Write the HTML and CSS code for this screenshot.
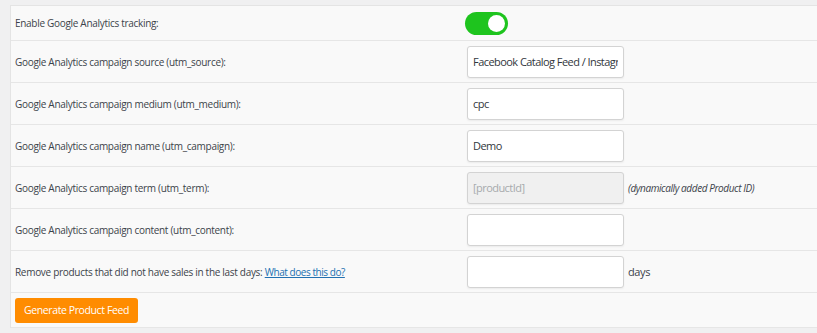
FILE: index.html
```html
<!DOCTYPE html>
<html lang="en">
<head>
  <meta charset="UTF-8">
  <meta name="viewport" content="width=device-width, initial-scale=1.0">
  <title>feed settings</title>
  <link rel="stylesheet" href="styles.css">
</head>
<body>

  <div class="panel">
    <div class="row first">
      <label class="row-label">Enable Google Analytics tracking:</label>
      <span class="toggle on"><span class="knob"></span></span>
    </div>
    <div class="row">
      <label class="row-label">Google Analytics campaign source (utm_source):</label>
      <input class="text-input" type="text" value="Facebook Catalog Feed / Instagram">
    </div>
    <div class="row">
      <label class="row-label">Google Analytics campaign medium (utm_medium):</label>
      <input class="text-input" type="text" value="cpc">
    </div>
    <div class="row">
      <label class="row-label">Google Analytics campaign name (utm_campaign):</label>
      <input class="text-input" type="text" value="Demo">
    </div>
    <div class="row">
      <label class="row-label">Google Analytics campaign term (utm_term):</label>
      <input class="text-input" type="text" value="[productId]" disabled>
      <span class="hint">(dynamically added Product ID)</span>
    </div>
    <div class="row">
      <label class="row-label">Google Analytics campaign content (utm_content):</label>
      <input class="text-input" type="text" value="">
    </div>
    <div class="row">
      <label class="row-label">Remove products that did not have sales in the last days: <a href="#" class="help-link">What does this do?</a></label>
      <input class="text-input" type="text" value="">
      <span class="unit">days</span>
    </div>
    <div class="row button-row">
      <a href="#" class="feed-button">Generate Product Feed</a>
    </div>
  </div>

</body>
</html>
```

FILE: styles.css
```css
body {
  font-family: "Open Sans", Arial, sans-serif;
  background: #f0f0f1;
  margin: 0;
  padding: 5px 0 0 10px;
  color: #3c434a;
}

.panel {
  background: #f9f9f9;
  border-top: 1px solid #e4e4e4;
  border-left: 1px solid #e4e4e4;
}

.row {
  display: flex;
  align-items: center;
  height: 41px;
  padding-left: 4px;
  border-bottom: 1px solid #e6e6e6;
}

.row.first {
  height: 34px;
}

.row-label {
  width: 452px;
  flex-shrink: 0;
  font-size: 10px;
  letter-spacing: -0.3px;
}

.help-link {
  color: #2271b1;
  letter-spacing: -0.45px;
}

.toggle {
  display: flex;
  align-items: center;
  justify-content: flex-end;
  width: 43px;
  height: 23px;
  margin-left: -2px;
  padding: 0 3px;
  box-sizing: border-box;
  border-radius: 12px;
  background: #1ec41e;
}

.knob {
  width: 17px;
  height: 17px;
  border-radius: 50%;
  background: #fff;
}

.text-input {
  width: 157px;
  height: 32px;
  box-sizing: border-box;
  margin: 0;
  padding: 0 5px;
  border: 1px solid #d3d3d3;
  border-radius: 3px;
  background: #fff;
  box-shadow: 0 1px 2px rgba(0,0,0,0.06);
  font-family: "Open Sans", Arial, sans-serif;
  font-size: 11px;
  letter-spacing: -0.55px;
  color: #32373c;
}

.text-input:disabled {
  background: #f0f0f0;
  color: #a7aaad;
}

.hint {
  margin-left: 4px;
  font-size: 10px;
  font-style: italic;
  letter-spacing: -0.4px;
}

.unit {
  margin-left: 4px;
  font-size: 11px;
  letter-spacing: -0.4px;
}

.button-row {
  height: 34px;
}

.feed-button {
  display: block;
  width: 123px;
  height: 25px;
  line-height: 25px;
  text-align: center;
  background: #ff8c00;
  color: #fff;
  border-radius: 3px;
  font-size: 10.5px;
  letter-spacing: -0.4px;
  text-decoration: none;
}
```
